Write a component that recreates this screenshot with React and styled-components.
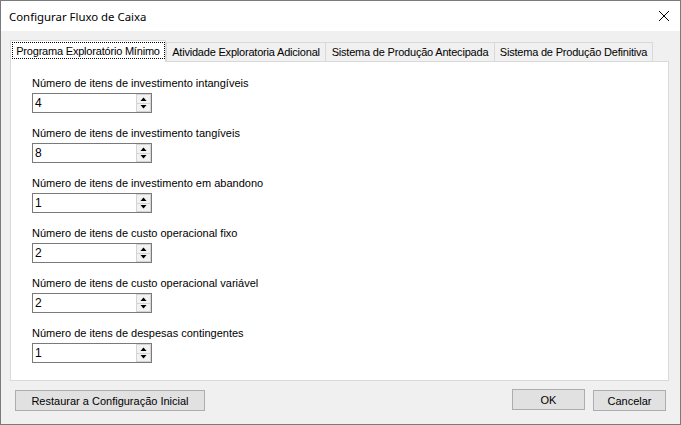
import React from 'react';
import styled, { createGlobalStyle } from 'styled-components';

const GlobalStyle = createGlobalStyle`
  html, body {
    margin: 0;
    padding: 0;
    background: #ffffff;
  }
`;

const tabs = [
  { label: 'Programa Exploratório Mínimo', width: 156 },
  { label: 'Atividade Exploratoria Adicional', width: 160 },
  { label: 'Sistema de Produção Antecipada', width: 170 },
  { label: 'Sistema de Produção Definitiva', width: 159 },
];

const fields = [
  { label: 'Número de itens de investimento intangíveis', value: '4' },
  { label: 'Número de itens de investimento tangíveis', value: '8' },
  { label: 'Número de itens de investimento em abandono', value: '1' },
  { label: 'Número de itens de custo operacional fixo', value: '2' },
  { label: 'Número de itens de custo operacional variável', value: '2' },
  { label: 'Número de itens de despesas contingentes', value: '1' },
];

const Window = styled.div`
  box-sizing: border-box;
  width: 681px;
  height: 425px;
  border: 1px solid #7a7a7a;
  display: flex;
  flex-direction: column;
  background: #f0f0f0;
  font-family: "Liberation Sans", Arial, sans-serif;
  font-size: 11px;
  color: #000;
`;

const TitleBar = styled.div`
  height: 30px;
  background: #fff;
  display: flex;
  align-items: center;
  justify-content: space-between;
  padding: 0 10px 0 8px;
  font-family: "Noto Sans", "Open Sans", sans-serif;
  font-size: 11.4px;
`;

const Body = styled.div`
  flex: 1;
  display: flex;
  flex-direction: column;
  padding: 9px 11px 0 9px;
`;

const TabStrip = styled.div`
  display: flex;
  align-items: flex-end;
  height: 21px;
  position: relative;
  z-index: 1;
`;

const Tab = styled.div`
  box-sizing: border-box;
  width: ${p => p.width}px;
  height: ${p => (p.active ? 22 : 19)}px;
  margin-bottom: ${p => (p.active ? -1 : 0)}px;
  margin-left: ${p => (p.overlap ? -1 : 0)}px;
  border: 1px solid #d9d9d9;
  border-bottom: none;
  background: ${p => (p.active ? '#fff' : '#f0f0f0')};
  display: flex;
  align-items: ${p => (p.active ? 'flex-start' : 'center')};
  justify-content: center;
  padding-top: ${p => (p.active ? 1 : 0)}px;
  white-space: nowrap;
  letter-spacing: -0.2px;
`;

const FocusRect = styled.span`
  box-sizing: border-box;
  display: flex;
  align-items: center;
  justify-content: center;
  width: 153px;
  height: 17px;
  border: 1px dotted #000;
`;

const Panel = styled.div`
  box-sizing: border-box;
  height: 320px;
  background: #fff;
  border: 1px solid #d9d9d9;
  padding: 15px 0 0 21px;
  display: flex;
  flex-direction: column;
  gap: 14px;
`;

const Field = styled.div`
  display: flex;
  flex-direction: column;
  gap: 3px;
`;

const Label = styled.div`
  line-height: 13px;
  height: 13px;
  white-space: nowrap;
`;

const Spin = styled.div`
  box-sizing: border-box;
  width: 120px;
  height: 20px;
  border: 1px solid #7a7a7a;
  background: #fff;
  display: flex;
  align-items: stretch;
`;

const SpinValue = styled.div`
  flex: 1;
  padding-left: 2px;
  font-size: 12px;
  line-height: 18px;
`;

const SpinButtons = styled.div`
  width: 15px;
  display: flex;
  flex-direction: column;
`;

const SpinButton = styled.div`
  flex: 1;
  box-sizing: border-box;
  border: 1px solid #d4d4d4;
  border-top: ${p => (p.down ? 'none' : '1px solid #d4d4d4')};
  background: #f2f2f2;
  display: flex;
  align-items: center;
  justify-content: center;
`;

const Footer = styled.div`
  display: flex;
  align-items: flex-start;
  margin-top: 9px;
  padding: 0 3px 0 5px;
`;

const Button = styled.div`
  box-sizing: border-box;
  width: ${p => p.width}px;
  height: 21px;
  margin-top: ${p => p.offset || 0}px;
  margin-left: ${p => p.gap || 0}px;
  border: 1px solid #adadad;
  background: #e1e1e1;
  display: flex;
  align-items: center;
  justify-content: center;
  white-space: nowrap;
  font-size: 11px;
`;

const Spacer = styled.div`
  flex: 1;
`;

const Triangle = ({ down }) => (
  <svg width="7" height="4" viewBox="0 0 7 4">
    <polygon points={down ? '0.5,0 6.5,0 3.5,3.5' : '0.5,4 6.5,4 3.5,0.5'} fill="#000" />
  </svg>
);

const CloseIcon = () => (
  <svg width="12" height="12" viewBox="0 0 12 12">
    <path d="M1 1 L11 11 M11 1 L1 11" stroke="#000" strokeWidth="1" />
  </svg>
);

export default function App() {
  return (
    <>
      <GlobalStyle />
      <Window>
        <TitleBar>
          <span>Configurar Fluxo de Caixa</span>
          <CloseIcon />
        </TitleBar>
        <Body>
          <TabStrip>
            {tabs.map((t, i) => (
              <Tab key={t.label} width={t.width} active={i === 0} overlap={i > 1}>
                {i === 0 ? <FocusRect>{t.label}</FocusRect> : t.label}
              </Tab>
            ))}
          </TabStrip>
          <Panel>
            {fields.map(f => (
              <Field key={f.label}>
                <Label>{f.label}</Label>
                <Spin>
                  <SpinValue>{f.value}</SpinValue>
                  <SpinButtons>
                    <SpinButton><Triangle /></SpinButton>
                    <SpinButton down><Triangle down /></SpinButton>
                  </SpinButtons>
                </Spin>
              </Field>
            ))}
          </Panel>
          <Footer>
            <Button width={190}>Restaurar a Configuração Inicial</Button>
            <Spacer />
            <Button width={73} offset={-1}>OK</Button>
            <Button width={73} gap={8}>Cancelar</Button>
          </Footer>
        </Body>
      </Window>
    </>
  );
}
